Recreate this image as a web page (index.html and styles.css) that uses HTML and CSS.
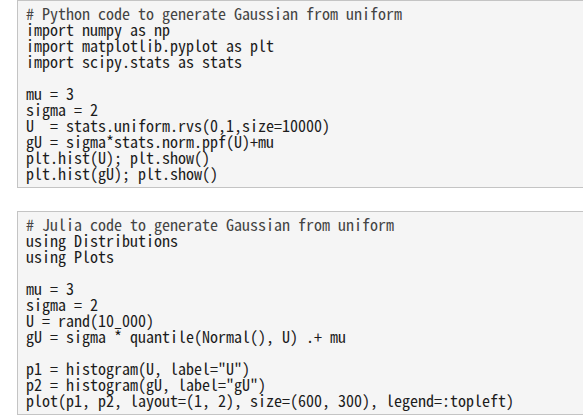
FILE: index.html
```html
<!DOCTYPE html>
<html>
<head>
<meta charset="utf-8">
<link rel="stylesheet" href="styles.css">
</head>
<body>
<div class="page">
<pre class="code"><span class="cm"># Python code to generate Gaussian from uniform</span>
import numpy as np
import matplotlib.pyplot as plt
import scipy.stats as stats

mu = 3
sigma = 2
U  = stats.uniform.rvs(0,1,size=10000)
gU = sigma*stats.norm.ppf(U)+mu
plt.hist(U); plt.show()
plt.hist(gU); plt.show()</pre>
<pre class="code"><span class="cm"># Julia code to generate Gaussian from uniform</span>
using Distributions
using Plots

mu = 3
sigma = 2
U = rand(10_000)
gU = sigma * quantile(Normal(), U) .+ mu

p1 = histogram(U, label="U")
p2 = histogram(gU, label="gU")
plot(p1, p2, layout=(1, 2), size=(600, 300), legend=:topleft)</pre>
</div>
</body>
</html>
```
FILE: styles.css
```css
html, body {
  margin: 0;
  padding: 0;
  overflow: hidden;
  background: #ffffff;
}
.page {
  display: flex;
  flex-direction: column;
  gap: 23px;
  padding-left: 17px;
  width: 640px;
}
.code {
  margin: 0;
  padding: 4px 8px 6px;
  background: #f5f5f5;
  border: 1px solid #c4c4c4;
  font-family: "Noto Sans Mono CJK JP", "Liberation Mono", monospace;
  font-size: 16px;
  line-height: 16px;
  color: #1c1c1c;
  white-space: pre;
}
.cm {
  color: #444444;
}
```
